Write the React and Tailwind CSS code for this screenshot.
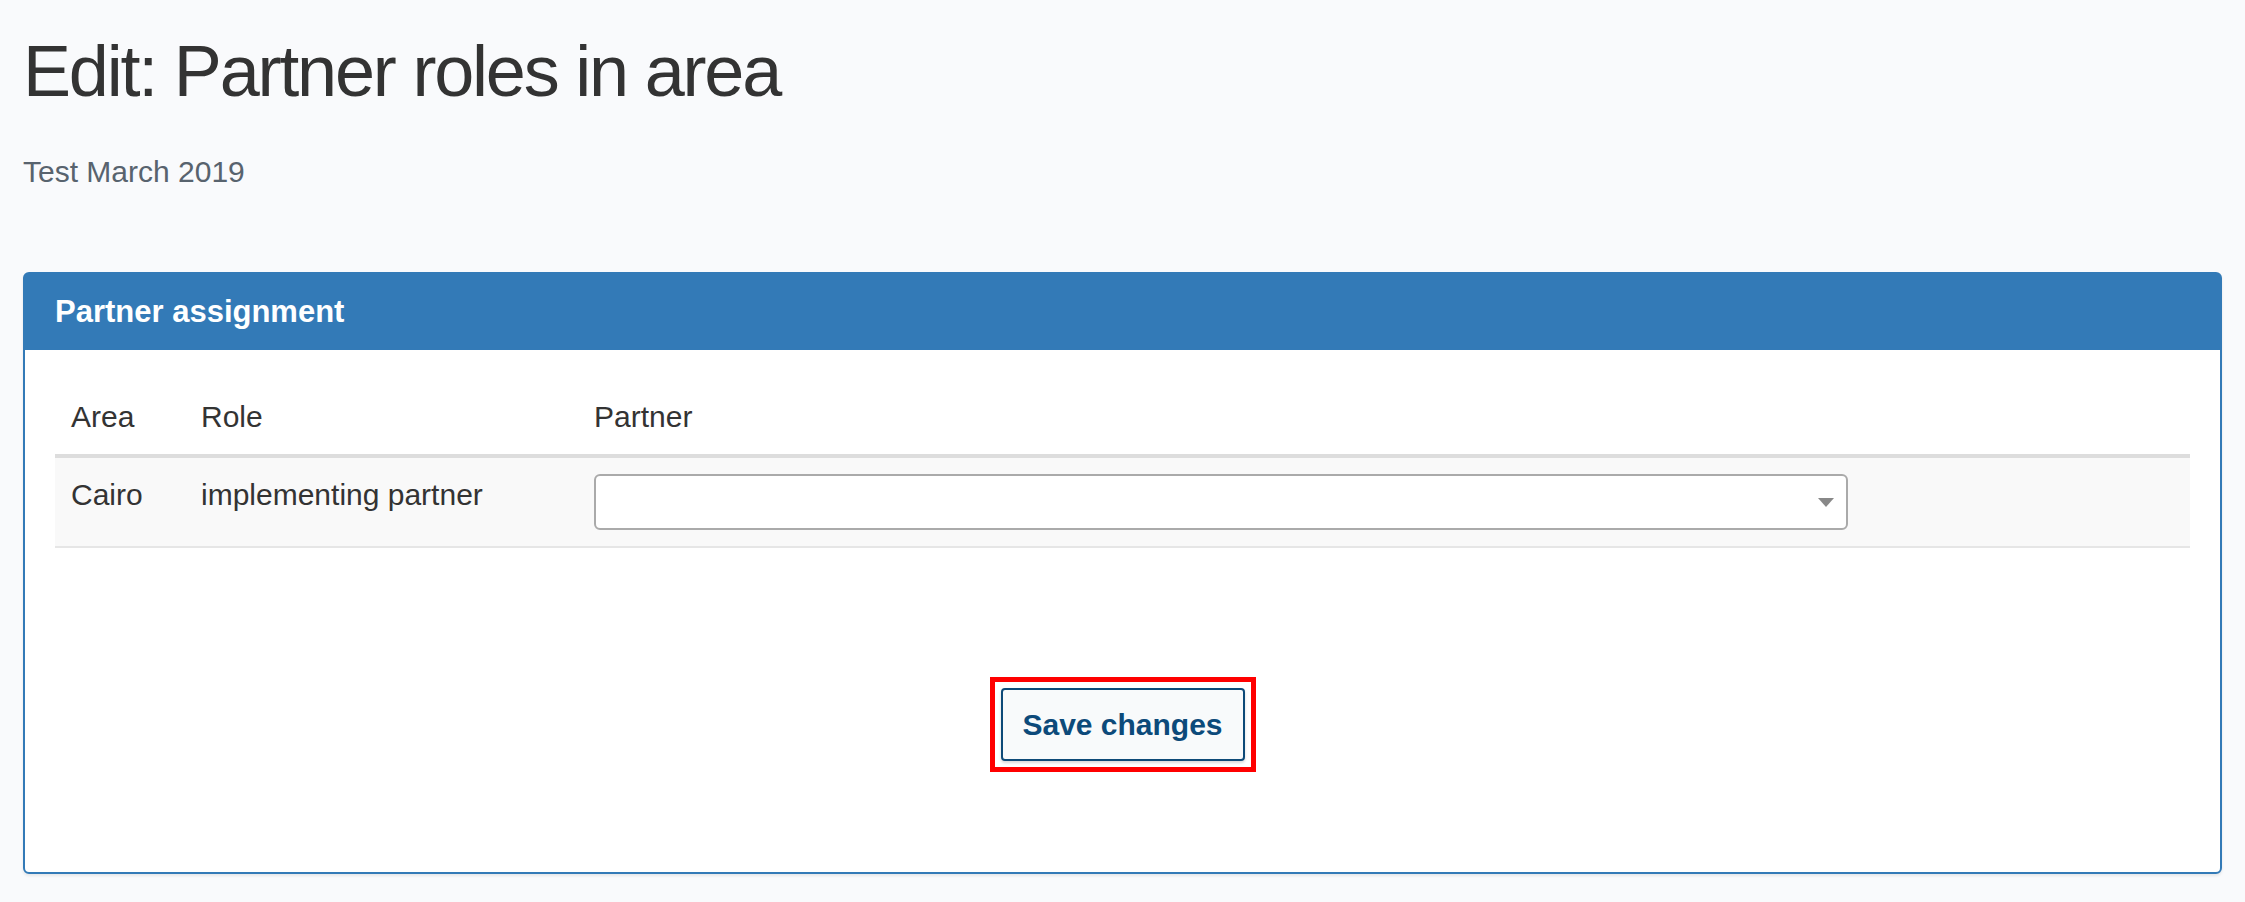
// App.jsx
export default function App() {
  const rows = [{ area: 'Cairo', role: 'implementing partner' }];

  return (
    <div className="min-h-screen bg-[#f9fafc] px-[23px] pt-[33px] font-['Liberation_Sans',Arial,sans-serif] text-[#333]">
      <h1 className="text-[72px] leading-[77px] tracking-[-2.2px] text-[#333]">Edit: Partner roles in area</h1>
      <p className="mt-[40px] text-[30px] leading-[43px] text-[#58636e]">Test March 2019</p>

      <div className="mt-[79px] rounded-[6px] border-2 border-[#337ab7] bg-white shadow-[0_2px_3px_rgba(0,0,0,0.08)]">
        <div className="flex h-[76px] items-center bg-[#337ab7] px-[30px]">
          <h2 className="text-[31px] font-bold text-white">Partner assignment</h2>
        </div>

        <div className="px-[30px] pt-[30px] pb-[100px]">
          <table className="w-full border-collapse text-[30px] leading-[42px]">
            <thead>
              <tr className="border-b-4 border-[#dddddd]">
                <th className="w-[130px] px-[16px] py-[16px] text-left font-normal">Area</th>
                <th className="w-[393px] px-[16px] py-[16px] text-left font-normal">Role</th>
                <th className="px-[16px] py-[16px] text-left font-normal">Partner</th>
              </tr>
            </thead>
            <tbody>
              {rows.map((row) => (
                <tr key={row.area} className="border-b-2 border-[#e6e6e6] bg-[#f9f9f9]">
                  <td className="px-[16px] py-[16px] align-top">{row.area}</td>
                  <td className="px-[16px] py-[16px] align-top">{row.role}</td>
                  <td className="px-[16px] py-[16px] align-top">
                    <div className="flex h-[56px] w-[1254px] items-center justify-end rounded-[6px] border-2 border-[#aaaaaa] bg-white pr-[12px]">
                      <svg width="16" height="9" viewBox="0 0 16 9">
                        <path d="M0 0 H16 L8 9 Z" fill="#888888" />
                      </svg>
                    </div>
                  </td>
                </tr>
              ))}
            </tbody>
          </table>

          <div className="mt-[129px] flex justify-center">
            <div className="border-[5px] border-[#ff0000] p-[6px]">
              <button className="h-[73px] w-[244px] rounded-[4px] border-2 border-[#0d4a78] bg-[#f8fafb] text-[30px] font-bold text-[#0c4a7a] shadow-[0_2px_3px_rgba(0,0,0,0.15)]">
                Save changes
              </button>
            </div>
          </div>
        </div>
      </div>
    </div>
  );
}
